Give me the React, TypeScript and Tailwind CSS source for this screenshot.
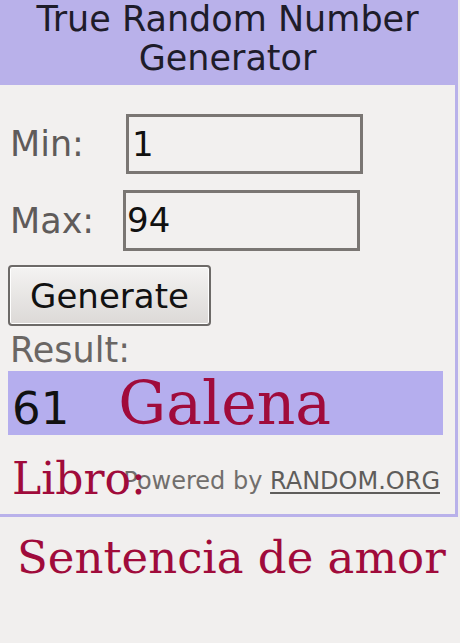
import React from "react";

const sans = { fontFamily: '"DejaVu Sans", Verdana, sans-serif' };
const serif = { fontFamily: '"DejaVu Serif", "Liberation Serif", serif' };

export default function App() {
  return (
    <div className="w-[460px] min-h-[643px] bg-[#f1efee]" style={sans}>
      <div className="w-[458px] border-r-[3px] border-b-[3px] border-[#b9b1ea] bg-[#f2f0ef]">
        <div className="h-[85px] bg-[#b9b1ea] text-center text-[35px] leading-[39px] text-[#1e1c2a]">
          <div>True Random Number</div>
          <div>Generator</div>
        </div>
        <div className="relative pl-[8px] pr-[15px] pt-[29px] pb-[19px]">
          <div className="flex items-center">
            <span className="w-[118px] pl-[2px] text-[35px] leading-[40px] text-[#5f5b5a]">Min:</span>
            <div className="w-[237px] h-[60px] border-[3px] border-[#7a7673] bg-[#f2f0ef] flex items-center pl-[3px] text-[34px] text-[#111]">1</div>
          </div>
          <div className="flex items-center mt-[16px]">
            <span className="w-[115px] pl-[2px] text-[35px] leading-[40px] text-[#5f5b5a]">Max:</span>
            <div className="w-[237px] h-[61px] border-[3px] border-[#7a7673] bg-[#f2f0ef] flex items-center pl-[1px] text-[34px] text-[#111]">94</div>
          </div>
          <button className="mt-[14px] w-[203px] h-[61px] rounded-[4px] border-2 border-[#6d6a68] bg-gradient-to-b from-[#f4f3f2] to-[#dcd9d7] text-[34px] leading-[40px] text-[#111] shadow-[inset_0_0_0_1px_#ffffff]">
            Generate
          </button>
          <div className="mt-[4px] pl-[2px] text-[35px] leading-[40px] text-[#6a6664]">Result:</div>
          <div className="mt-[1px] w-[435px] h-[64px] bg-[#b5aeee] flex items-baseline pl-[4px]">
            <span className="text-[45px] leading-[64px] text-[#111]">61</span>
            <span className="ml-[49px] text-[60px] leading-[64px] text-[#a00b3b]" style={serif}>Galena</span>
          </div>
          <div className="mt-[32px] text-right text-[24px] leading-[28px] text-[#716e6c]">
            Powered by <span className="underline decoration-2 underline-offset-[3px] text-[#5f5d5b]">RANDOM.ORG</span>
          </div>
          <div className="absolute left-[12px] bottom-[10px] text-[44px] leading-[50px] text-[#a00b3b]" style={serif}>Libro:</div>
        </div>
      </div>
      <div className="mt-[15px] pl-[17px] text-[45px] leading-[52px] text-[#a00b3b]" style={serif}>
        Sentencia de amor
      </div>
    </div>
  );
}
